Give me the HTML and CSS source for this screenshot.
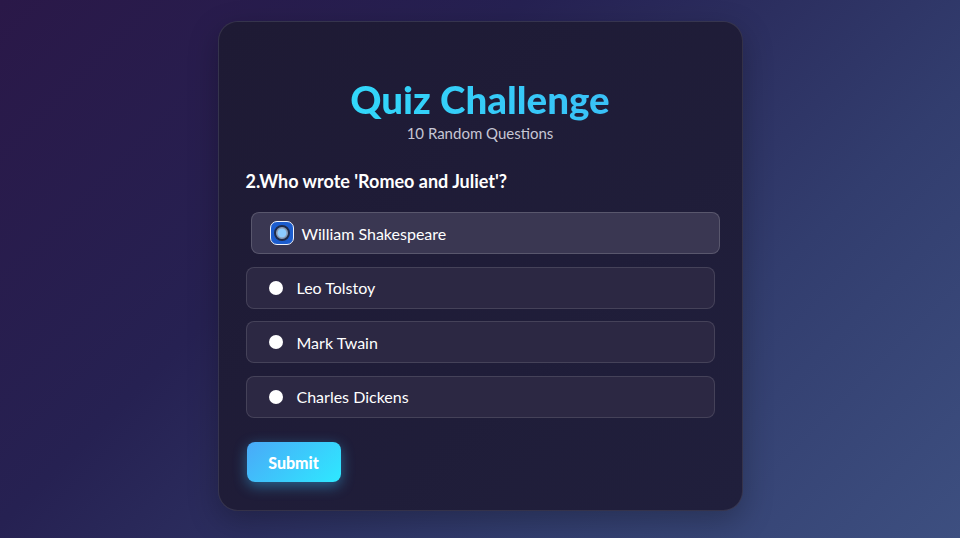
FILE: index.html
```html
<!DOCTYPE html>
<html>
<head>
<meta charset="utf-8">
<link rel="stylesheet" href="styles.css">
</head>
<body>
<div class="card">
  <h1 class="title">Quiz Challenge</h1>
  <p class="subtitle">10 Random Questions</p>
  <h2 class="question">2.Who wrote 'Romeo and Juliet'?</h2>
  <div class="options">
    <label class="option selected"><span class="radio-wrap"><span class="radio checked"></span></span><span class="label">William Shakespeare</span></label>
    <label class="option"><span class="radio-wrap"><span class="radio"></span></span><span class="label">Leo Tolstoy</span></label>
    <label class="option"><span class="radio-wrap"><span class="radio"></span></span><span class="label">Mark Twain</span></label>
    <label class="option"><span class="radio-wrap"><span class="radio"></span></span><span class="label">Charles Dickens</span></label>
  </div>
  <button class="submit">Submit</button>
</div>
</body>
</html>
```
FILE: styles.css
```css
html, body { height: 100%; }
body {
  margin: 0;
  font-family: "Lato", "Noto Sans", sans-serif;
  background: linear-gradient(135deg, #2a1848 0%, #262152 35%, #323d6e 70%, #3d4f80 100%);
  display: flex;
  justify-content: center;
  align-items: flex-start;
  overflow: hidden;
}
.card {
  margin-top: 21px;
  width: 525px;
  height: 490px;
  box-sizing: border-box;
  padding: 54px 27px 0 27px;
  background: linear-gradient(135deg, #1e1a34 0%, #201f3c 100%);
  border: 1px solid rgba(255,255,255,0.1);
  border-radius: 20px;
  box-shadow: 0 10px 30px rgba(0,0,0,0.25);
}
.title {
  margin: 0;
  text-align: center;
  font-size: 38.5px;
  font-weight: 900;
  line-height: 46px;
  background: linear-gradient(90deg, #2fe0fb, #3cb8f6);
  -webkit-background-clip: text;
  background-clip: text;
  color: transparent;
}
.subtitle {
  margin: 0;
  text-align: center;
  font-size: 15px;
  color: #c6c6d4;
  line-height: 22px;
}
.question {
  margin: 24px 0 18px 0;
  font-size: 18px;
  font-weight: 700;
  color: #ffffff;
  line-height: 26px;
}
.options {
  display: flex;
  flex-direction: column;
  gap: 12.5px;
}
.option {
  display: flex;
  align-items: center;
  height: 42px;
  box-sizing: border-box;
  padding-left: 22px;
  background: #2c2843;
  border: 1px solid rgba(255,255,255,0.12);
  border-radius: 8px;
  color: #ffffff;
  font-size: 16px;
}
.option.selected {
  transform: translateX(5px);
  background: #3a3752;
  border-color: rgba(255,255,255,0.16);
}
.radio-wrap {
  width: 14px;
  height: 14px;
  display: flex;
  align-items: center;
  justify-content: center;
  margin-right: 14px;
}
.radio {
  width: 14px;
  height: 14px;
  border-radius: 50%;
  background: #ffffff;
  box-sizing: border-box;
  flex: none;
}
.option.selected .radio-wrap {
  width: 24px;
  height: 24px;
  margin-left: -4px;
  margin-right: 8px;
  border-radius: 7px;
  background: #1b5cce;
  border: 1.5px solid #eef2fb;
  box-sizing: border-box;
}
.option.selected .radio {
  width: 16px;
  height: 16px;
  border: 2px solid #1f2a48;
  background: #8ccbff;
  box-shadow: inset 0 0 0 1.5px #8d98ae;
}
.submit {
  margin-top: 24.5px;
  width: 94px;
  height: 40px;
  border: none;
  border-radius: 8px;
  background: linear-gradient(135deg, #4aa9f8, #2ee9ff);
  color: #ffffff;
  font-family: inherit;
  font-size: 16px;
  font-weight: 900;
  box-shadow: 0 4px 14px rgba(56, 189, 248, 0.45);
  margin-left: 1px;
}
```
